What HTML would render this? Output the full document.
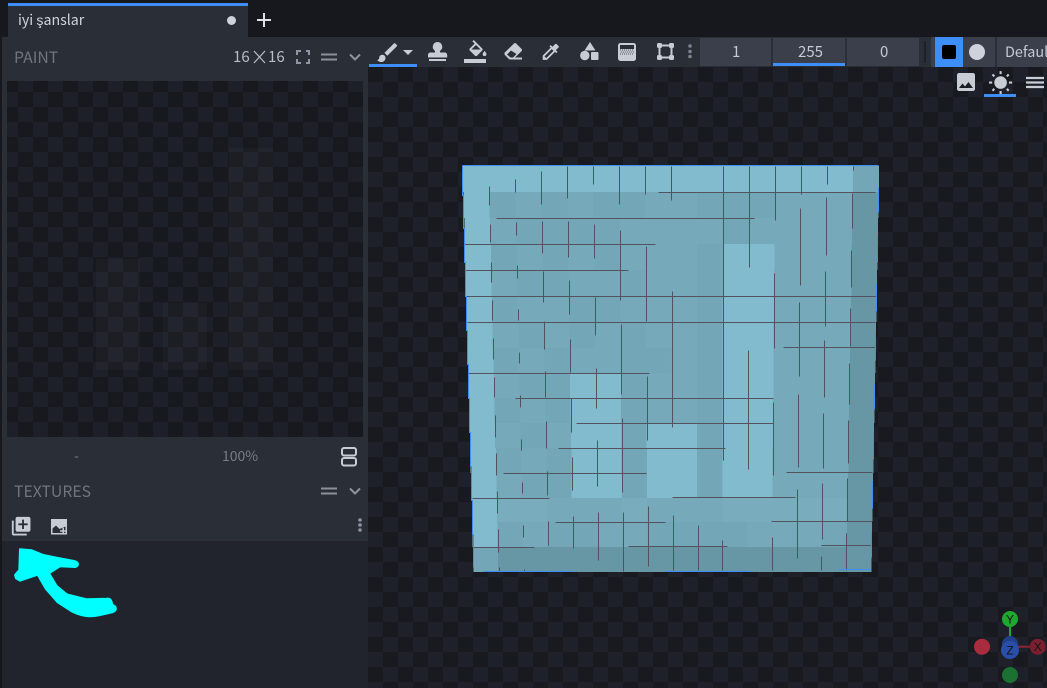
<!DOCTYPE html>
<html><head><meta charset="utf-8"><style>
html,body{margin:0;padding:0;width:1047px;height:688px;overflow:hidden;background:#17181d}
body{position:relative;font-family:"Noto Sans CJK JP","Liberation Sans",sans-serif}
.b{position:absolute}
.t{position:absolute;white-space:nowrap;line-height:20px;font-size:16px}
svg{position:absolute;left:0;top:0}
.ic{fill:#c8ccd5}
.ta{stroke:#82bbce}.tb{stroke:#79adbe}.tc{stroke:#76aaba}.td{stroke:#73a7b7}.te{stroke:#6796a4}
#tex path{fill:none;stroke-width:1}
</style></head><body>
<!-- viewport -->
<div class="b" style="left:368px;top:67px;width:679px;height:621px;background:conic-gradient(#1e212a 25%,#181a20 0 50%,#1e212a 0 75%,#181a20 0);background-size:30px 30px"></div>
<!-- toolbar -->
<div class="b" style="left:368px;top:37px;width:679px;height:30px;background:#292e37"></div>
<div class="b" style="left:369px;top:64px;width:48px;height:3px;background:#3e8ef7"></div>
<div class="b" style="left:700px;top:38px;width:71px;height:28px;background:#3a3f4b"></div>
<div class="b" style="left:773px;top:38px;width:72px;height:28px;background:#3a3f4b"></div>
<div class="b" style="left:773px;top:63px;width:72px;height:3px;background:#3e8ef7"></div>
<div class="b" style="left:847px;top:38px;width:72px;height:28px;background:#3a3f4b"></div>
<div class="b" style="left:924px;top:41px;width:2px;height:22px;background:#1d2026"></div>
<div class="b" style="left:931px;top:37px;width:64px;height:30px;background:#3a3f4b"></div>
<div class="b" style="left:935px;top:37px;width:28px;height:30px;background:#3e8ef7"></div>
<div class="b" style="left:942px;top:45px;width:14px;height:14px;background:#000;border-radius:2px"></div>
<div class="b" style="left:969px;top:44px;width:16px;height:16px;background:#cfd2da;border-radius:50%"></div>
<div class="b" style="left:997px;top:37px;width:50px;height:30px;background:#3a3f4b"></div>
<div class="t" style="left:732px;top:42px;color:#c4cad6;font-size:15px">1</div>
<div class="t" style="left:798px;top:42px;color:#c4cad6;font-size:15px">255</div>
<div class="t" style="left:880px;top:42px;color:#c4cad6;font-size:15px">0</div>
<div class="t" style="left:1005px;top:42px;color:#c4cad6;font-size:14.400px">Default</div>
<div class="b" style="left:984px;top:94px;width:32px;height:3px;background:#3e8ef7"></div>
<!-- left panel -->
<div class="b" style="left:2px;top:37px;width:366px;height:651px;background:#292e37"></div>
<div class="b" style="left:2px;top:541px;width:366px;height:147px;background:#21242c"></div>
<div class="b" style="left:7px;top:81px;width:356px;height:356px;background:conic-gradient(#1d2028 25%,#17191e 0 50%,#1d2028 0 75%,#17191e 0);background-size:30px 30px;background-position:11px 11px"></div>
<div class="b" style="left:229px;top:148px;width:44px;height:222px;background:rgba(255,255,255,.025)"></div>
<div class="b" style="left:96px;top:259px;width:44px;height:111px;background:rgba(255,255,255,.025)"></div>
<div class="b" style="left:163px;top:303px;width:44px;height:67px;background:rgba(255,255,255,.025)"></div>
<!-- tab -->
<div class="b" style="left:8px;top:3px;width:240px;height:34px;background:#292e37"></div>
<div class="b" style="left:8px;top:3px;width:240px;height:3px;background:#3e8ef7"></div>
<div class="t" style="left:18px;top:10px;color:#d0d4dc;font-size:14.200px">iyi şanslar</div>
<div class="b" style="left:227px;top:16px;width:9px;height:9px;background:#cfd2da;border-radius:50%"></div>
<div class="b" style="left:257px;top:19px;width:14px;height:2px;background:#dfe2e8"></div>
<div class="b" style="left:263px;top:13px;width:2px;height:14px;background:#dfe2e8"></div>
<div class="t" style="left:14px;top:47px;color:#6f747d;font-size:15.800px">PAINT</div>
<div class="t" style="left:233px;top:47px;color:#b9bec8;font-size:15px">16</div>
<div class="t" style="left:268px;top:47px;color:#b9bec8;font-size:15px">16</div>
<div class="t" style="left:74px;top:446px;color:#787d86;font-size:14px">-</div>
<div class="t" style="left:222px;top:446px;color:#787d86;font-size:14px">100%</div>
<div class="t" style="left:14px;top:481px;color:#6f747d;font-size:15.800px">TEXTURES</div>

<!-- texture -->
<svg id="tex" width="1047" height="688" shape-rendering="crispEdges">
<g transform="translate(463 166) scale(26 26)"><path class="ta" d="M0 .5h15"/><path class="td" d="M15 .5h1"/></g>
<g transform="translate(463.7 192) scale(25.93 26)"><path class="tc" d="M1 .5h14"/><path class="ta" d="M0 .5h1"/><path class="td" d="M1 .5h1M3 .5h1M5 .5h2M9 .5h3"/><path class="te" d="M15 .5h1"/></g>
<g transform="translate(464.4 218) scale(25.85 26)"><path class="tc" d="M1 .5h14"/><path class="ta" d="M0 .5h1"/><path class="td" d="M2 .5h4M10 .5h1"/><path class="te" d="M15 .5h1"/></g>
<g transform="translate(465.1 244) scale(25.77 26)"><path class="tc" d="M1 .5h14"/><path class="ta" d="M0 .5h1M10 .5h2"/><path class="td" d="M1 .5h1M3 .5h1M5 .5h1M9 .5h1"/><path class="te" d="M15 .5h1"/></g>
<g transform="translate(465.8 270) scale(25.7 26)"><path class="tc" d="M1 .5h14"/><path class="ta" d="M0 .5h1M10 .5h2"/><path class="td" d="M2 .5h2M6 .5h1M9 .5h1"/><path class="te" d="M15 .5h1"/></g>
<g transform="translate(466.5 296) scale(25.62 26)"><path class="tc" d="M1 .5h14"/><path class="ta" d="M0 .5h1M10 .5h2"/><path class="td" d="M1 .5h1M4 .5h2M9 .5h1"/><path class="te" d="M15 .5h1"/></g>
<g transform="translate(467.2 322) scale(25.54 26)"><path class="tc" d="M1 .5h14"/><path class="ta" d="M0 .5h1M10 .5h2"/><path class="td" d="M2 .5h1M4 .5h1M6 .5h1M9 .5h1"/><path class="te" d="M15 .5h1"/></g>
<g transform="translate(467.9 348) scale(25.47 25)"><path class="tc" d="M1 .5h14"/><path class="ta" d="M0 .5h1M10 .5h2"/><path class="td" d="M1 .5h1M3 .5h1M6 .5h2M9 .5h1"/><path class="te" d="M15 .5h1"/></g>
<g transform="translate(468.6 373) scale(25.39 25)"><path class="tc" d="M1 .5h14"/><path class="ta" d="M0 .5h1M4 .5h2M10 .5h2"/><path class="td" d="M2 .5h2M6 .5h1M9 .5h1"/><path class="te" d="M15 .5h1"/></g>
<g transform="translate(469.3 398) scale(25.32 25)"><path class="tc" d="M1 .5h14"/><path class="ta" d="M0 .5h1M4 .5h2M10 .5h2"/><path class="td" d="M1 .5h1M3 .5h1M6 .5h1M9 .5h1"/><path class="te" d="M15 .5h1"/></g>
<g transform="translate(470 423) scale(25.24 25)"><path class="tc" d="M1 .5h14"/><path class="ta" d="M0 .5h1M4 .5h2M7 .5h2M10 .5h2"/><path class="td" d="M2 .5h1M6 .5h1M9 .5h1"/><path class="te" d="M15 .5h1"/></g>
<g transform="translate(470.7 448) scale(25.17 25)"><path class="tc" d="M1 .5h14"/><path class="ta" d="M0 .5h1M4 .5h2M7 .5h2M10 .5h2"/><path class="td" d="M1 .5h1M3 .5h1M6 .5h1M9 .5h1"/><path class="te" d="M15 .5h1"/></g>
<g transform="translate(471.3 473) scale(25.1 25)"><path class="tc" d="M1 .5h14"/><path class="ta" d="M0 .5h1M4 .5h2M7 .5h2M10 .5h2"/><path class="td" d="M2 .5h2M6 .5h1M9 .5h1"/><path class="te" d="M15 .5h1"/></g>
<g transform="translate(472 498) scale(25.03 24)"><path class="tb" d="M1 .5h14"/><path class="ta" d="M0 .5h1"/><path class="tc" d="M3 .5h3M7 .5h3"/><path class="te" d="M15 .5h1"/></g>
<g transform="translate(472.7 522) scale(24.95 25)"><path class="td" d="M1 .5h14"/><path class="ta" d="M0 .5h1"/><path class="tc" d="M2 .5h1M5 .5h2M11 .5h3"/><path class="te" d="M15 .5h1"/></g>
<g transform="translate(473.3 547) scale(24.89 25)"><path class="te" d="M1 .5h15"/><path class="td" d="M0 .5h1"/></g>
<g transform="translate(.5 .5)" fill="none" stroke-width="1">
<path stroke="#53525f" style="stroke-width:1" d="M658 192H875M496 218H754M464 244H655M465 270H628M466 296H876M467 322H875M783 347H875M468 373H649M515 398H773M576 423H773M558 448H725M503 473H646M786 472H872M472 498H549M672 497H795M555 522H665M771 521H872M473 547H534M628 546H727M821 545H871
M489 186V205M490 224V242M491 262V282M492 300V320M493 338V359M494 377V397M495 415V437M496 453V475M497 491V513M498 529V552M499 567V571
M515 179V192M516 222V235M517 265V278M518 309V320M519 352V363M520 395V407M521 439V450M522 482V493M523 525V537M524 569V571
M541 171V204M542 221V253M543 271V302M544 321V349M545 371V397M546 421V448M547 471V495M548 521V545
M567 166V198M568 221V257M569 280V314M570 339V372M571 398V432M572 457V490M573 516V548
M593 166V184M594 224V258M595 297V335M596 368V408M597 440V486M598 512V560
M619 166V204M620 230V300M621 324V394M622 418V492M623 512V571
M645 166V194M646 246V321M647 376V440M648 506V566
M671 166V200M672 291V427M673 515V570M698 525V570
M723 166V460M722 540V570M749 166V267M748 350V469
M775 166V220M774 273V348M773 402V475M772 537V570
M801 166V194M800 208V285M799 302V376M798 394V467M797 489V558
M827 166V184M826 197V255M825 271V326M824 340V397M823 413V468M822 483V539M821 556V570
M853 166V170M852 193V228M851 250V287M850 308V346M849 363V404M848 420V463M847 478V521M846 533V570"/>
<path stroke="#3e8ef7" style="stroke-width:1" d="M462 165H878M462 165V195H463V228H464V262H465V296H466V330H467V364H468V398H469V432H470V466H471V500H472V534H473V567
M483 571H573M665 571H750M838 569H871M878 187V212M877 236V262M876 284V311M875 333V360M874 384V409M873 432V459M872 481V508M871 532V557"/>
</g>
</svg>

<!-- icons & misc -->
<svg width="1047" height="688">
<!-- × between 16 16 -->
<path d="M254 51L265 63M265 51L254 63" stroke="#b9bec8" stroke-width="1.200" fill="none"/>
<!-- fullscreen corners -->
<path d="M297 55V51H301M306 51H309V55M309 59V63H306M301 63H297V59" stroke="#8f96a3" stroke-width="2" fill="none"/>
<!-- equals & chevrons -->
<path d="M321 54.500H337M321 59.500H337M321 488.500H337M321 493.500H337" stroke="#8d9097" stroke-width="2" fill="none"/>
<path d="M350 54.500L355 59.500L360 54.500M350 488.500L355 493.500L360 488.500" stroke="#8f96a3" stroke-width="2" fill="none"/>
<!-- layout icon -->
<rect x="342" y="448" width="14" height="7.500" rx="2" fill="none" stroke="#c8ccd5" stroke-width="2"/>
<rect x="342" y="458" width="14" height="7.500" rx="2" fill="none" stroke="#c8ccd5" stroke-width="2"/>
<!-- brush -->
<g transform="translate(375 40) scale(1.05)" class="ic"><path d="M7 14c-1.660 0-3 1.340-3 3 0 1.310-1.160 2-2 2 .92 1.220 2.490 2 4 2 2.210 0 4-1.790 4-4 0-1.660-1.340-3-3-3zm13.710-9.370l-1.340-1.340a.996.996 0 0 0-1.410 0L9 12.250 11.750 15l8.960-8.960a.996.996 0 0 0 0-1.410z"/></g>
<path class="ic" d="M403 50H413L408 55Z"/>
<!-- stamp -->
<path class="ic" d="M437.500 42a4.800 4.800 0 0 1 3.200 8.300c-.8.8-.9 1.300-.7 2.200H444.500c1.700 0 2.700 1 2.700 2.700V57.500H428v-2.300c0-1.700 1-2.700 2.700-2.700H435c.2-.9.100-1.400-.7-2.200a4.800 4.800 0 0 1 3.200-8.300zM429 59H446V61H429Z"/>
<!-- fill -->
<g transform="translate(466.500 40) scale(.95)" class="ic"><path d="M16.560 8.940L7.620 0 6.210 1.410l2.380 2.380-5.150 5.150c-.59.59-.59 1.540 0 2.120l5.500 5.500c.29.29.68.44 1.060.44s.77-.15 1.060-.44l5.500-5.500c.59-.58.59-1.530 0-2.120zM5.210 10L10 5.210 14.790 10H5.210zM19 11.500s-2 2.170-2 3.500c0 1.100.9 2 2 2s2-.9 2-2c0-1.330-2-3.500-2-3.500z"/></g>
<rect x="464" y="59" width="22" height="4" class="ic"/>
<!-- eraser -->
<path class="ic" fill-rule="evenodd" d="M514 43.500c.6-.6 1.500-.6 2.100 0l5.500 5.500c.6.6.6 1.500 0 2.100L515 57.500H522V59.500H510c-.4 0-.8-.2-1-.4l-4-4c-.8-.8-.8-2 0-2.800ZM511 50.500L507 54.500L510.500 57.500H513L516.500 54Z"/>
<!-- colorize -->
<g transform="translate(540 41) scale(.9)" class="ic"><path d="M20.710 5.630l-2.340-2.340c-.39-.39-1.020-.39-1.410 0l-3.120 3.120-1.930-1.910-1.410 1.410 1.420 1.420L3 16.250V21h4.750l8.920-8.920 1.420 1.420 1.410-1.410-1.920-1.920 3.120-3.120c.4-.4.4-1.030.01-1.420zM6.920 19L5 17.080l8.060-8.060 1.920 1.920L6.920 19z"/></g>
<!-- shapes -->
<path class="ic" d="M590 42L595.500 50.500H584.500Z"/><circle class="ic" cx="584.800" cy="55.500" r="4.700"/><rect class="ic" x="591" y="52" width="7.500" height="8" rx="1"/>
<!-- gradient -->
<rect x="618" y="43" width="18" height="18" rx="2.500" fill="#c8ccd5"/>
<rect x="620" y="45" width="14" height="4" fill="#292e37"/>
<path d="M620 50H634M620.800 52H634M620 54H634" stroke="#4a4f5a" stroke-width="1" stroke-dasharray="1 1"/>
<!-- transform -->
<rect x="659.500" y="45.500" width="12" height="12" fill="none" stroke="#c8ccd5" stroke-width="2"/>
<rect x="657" y="43" width="5" height="5" rx="1.500" class="ic"/><rect x="669" y="43" width="5" height="5" rx="1.500" class="ic"/><rect x="657" y="55" width="5" height="5" rx="1.500" class="ic"/><rect x="669" y="55" width="5" height="5" rx="1.500" class="ic"/>
<!-- dots -->
<g fill="#7d8490"><circle cx="690" cy="46" r="1.800"/><circle cx="690" cy="51.500" r="1.800"/><circle cx="690" cy="56.500" r="1.800"/></g>
<g fill="#8d93a0"><circle cx="360" cy="520" r="1.800"/><circle cx="360" cy="525" r="1.800"/><circle cx="360" cy="530" r="1.800"/></g>
<!-- image -->
<g transform="translate(954 70)" class="ic"><path d="M21 19V5c0-1.100-.9-2-2-2H5c-1.100 0-2 .9-2 2v14c0 1.100.9 2 2 2h14c1.100 0 2-.9 2-2zM8.500 13.500l2.500 3.010L14.500 12l4.500 6H5l3.500-4.500z"/></g>
<!-- sun -->
<g transform="translate(988 70.500) scale(1.05)" class="ic"><path d="M6.760 4.840l-1.800-1.790-1.410 1.410 1.790 1.790 1.420-1.410zM4 10.500H1v2h3v-2zm9-9.950h-2V3.500h2V.55zm7.450 3.910l-1.410-1.410-1.790 1.790 1.410 1.410 1.790-1.790zm-3.210 13.700l1.790 1.800 1.410-1.410-1.800-1.790-1.400 1.400zM20 10.500v2h3v-2h-3zm-8-5c-3.310 0-6 2.690-6 6s2.690 6 6 6 6-2.690 6-6-2.690-6-6-6zm-1 16.950h2V19.500h-2v2.950zm-7.450-3.910l1.410 1.410 1.790-1.800-1.410-1.410-1.790 1.800z"/></g>
<!-- menu -->
<path d="M1026 78H1044M1026 82.500H1044M1026 87H1044" stroke="#c8ccd5" stroke-width="2.200" fill="none"/>
<!-- add -->
<g transform="translate(10 515) scale(.93)" class="ic"><path d="M4 6H2v14c0 1.100.9 2 2 2h14v-2H4V6zm16-4H8c-1.100 0-2 .9-2 2v12c0 1.100.9 2 2 2h12c1.100 0 2-.9 2-2V4c0-1.100-.9-2-2-2zm-1 9h-4v4h-2v-4H9V9h4V5h2v4h4v2z"/></g>
<!-- image plus -->
<path class="ic" d="M51 519H67V534.500H51Z"/>
<path fill="#292e37" d="M52.500 533V528.500L56 525.500L59.500 529L65.500 526.500V533Z"/>
<path class="ic" d="M60 530.300H62.500V527.800H64V530.300H66.500V531.800H64V534.300H62.500V531.800H60Z"/>
<!-- cyan arrow -->
<path fill="#00ffff" stroke="#00ffff" stroke-width="2" stroke-linejoin="round" d="M20 549.300L31.700 550.300L43.300 555L56.700 557.700L74 561C79 562 79 566 75 567L60 566.300L49 573.300L56.700 586L66.700 594.300L86.700 599.300L107 598.700C111 598 112 602 112.300 605C116 606 118 610 112.300 612.300C104 614 98 616 90 616.300C84 616 77 614 71.700 611.300L57.700 602.300L46 589L37.700 574.700L20 580.700L16 578.300L15 575L19.300 570Z"/>
<!-- gizmo -->
<circle cx="982" cy="646.700" r="8" fill="#a82c3e"/>
<circle cx="1010" cy="675" r="8" fill="#1b7032"/>
<path d="M1010 627V645" stroke="#1fa82f" stroke-width="2"/>
<path d="M1015 646.700H1030" stroke="#8e2535" stroke-width="2"/>
<circle cx="1037.700" cy="646.700" r="8" fill="#7a1f30"/>
<circle cx="1010" cy="619" r="8" fill="#1fa82f"/>
<circle cx="1010" cy="644" r="8" fill="#20408a"/>
<circle cx="1010" cy="650" r="9" fill="#2a4fa8"/>
<g font-family="Liberation Sans,sans-serif" font-size="12" text-anchor="middle" fill="#12141a">
<text x="1010" y="623.500">Y</text><text x="1010" y="654.500">Z</text><text x="1037.700" y="651">X</text></g>
</svg>
</body></html>
